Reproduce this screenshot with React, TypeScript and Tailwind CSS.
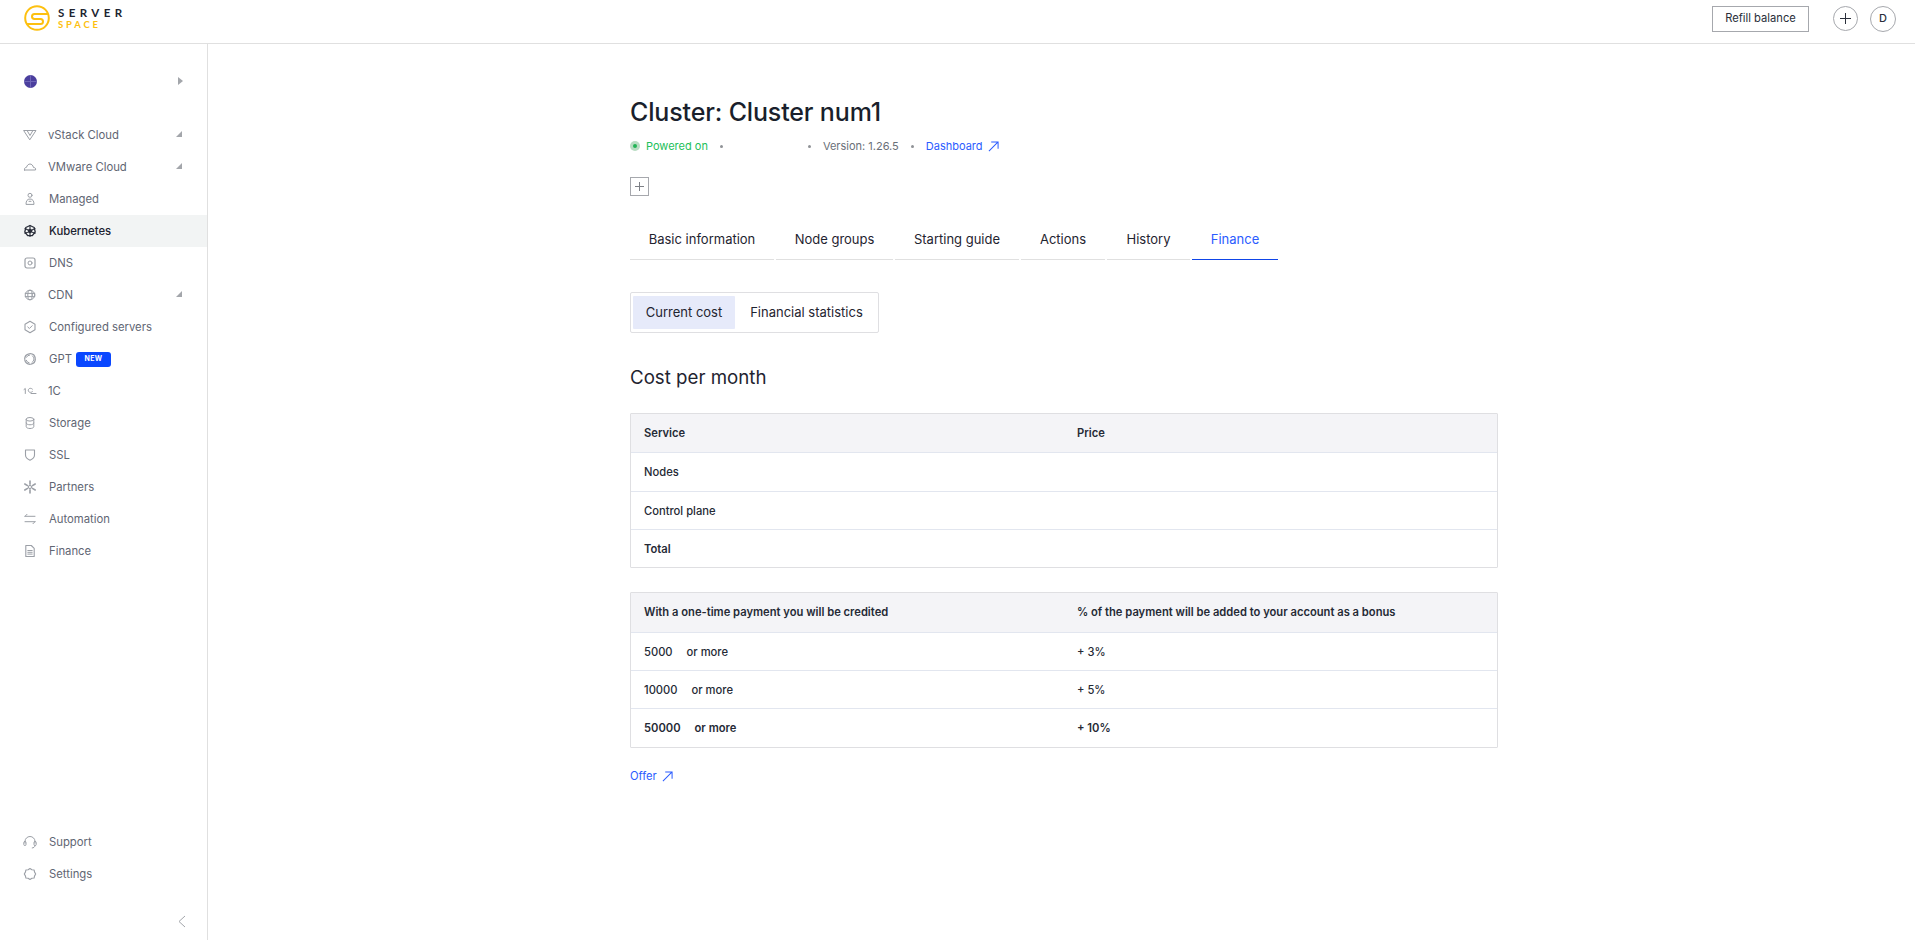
import React from "react";

const S = (p: { children: React.ReactNode; color?: string; w?: number }) => (
  <svg width={p.w ?? 16} height={p.w ?? 16} viewBox="0 0 16 16" fill="none" stroke={p.color ?? "#9b9fa6"} strokeWidth="1" strokeLinecap="round" strokeLinejoin="round">
    {p.children}
  </svg>
);

const icons: Record<string, React.ReactNode> = {
  vstack: <S><path d="M2 3.500h12L8 12.500z" /><path d="M5.200 3.700 8 8.500l2.800-4.800" /></S>,
  cloud: <S><path d="M2.500 11h11c.6-1.500-.6-2.700-2-2.500C11 6.300 9.500 5 8 5S5 6.300 4.500 8.300C3 8.300 2 9.700 2.500 11z" /></S>,
  managed: <S><circle cx="8" cy="4.300" r="2" /><path d="M4 13c0-3 1.200-5 4-5s4 2 4 5z" /><path d="M7 10.300h2" /></S>,
  k8s: <S color="#2a2e3a"><path d="M8 2.500l4.200 2 1 4.500-2.900 3.700H5.700L2.800 9l1-4.500z" strokeWidth="1.300" /><circle cx="8" cy="8" r="1.800" fill="#2a2e3a" /><path d="M8 2.500v11M3 5.500l10 5M13 5.500l-10 5" strokeWidth="1.100" /></S>,
  dns: <S><rect x="3" y="3" width="10" height="10" rx="2" strokeWidth="1.200" /><circle cx="8" cy="8" r="2" /></S>,
  cdn: <S><circle cx="8" cy="8" r="4.800" /><ellipse cx="8" cy="8" rx="2.200" ry="4.800" /><path d="M3.200 6.400h9.600M3.200 9.600h9.600" /></S>,
  conf: <S><path d="M8 2.300l5 2.900v5.600l-5 2.900-5-2.900V5.200z" strokeWidth="1.100" /><path d="M5.800 8l1.600 1.500 2.800-2.800" /></S>,
  gpt: <S><circle cx="8" cy="8" r="5.300" strokeDasharray="7 1.200" strokeWidth="1.300" /><circle cx="8" cy="8" r="4" strokeDasharray="4 3" /></S>,
  oneC: <S><path d="M2 6.500l1.300-1v5" /><path d="M10.500 6.200c-1.200-1.500-4-1.200-4.200 1s2.800 3 4.200 1.300" /><path d="M9 10.500h5" /></S>,
  storage: <S><ellipse cx="8" cy="4.300" rx="3.800" ry="1.800" /><path d="M4.200 4.300v7.400c0 1 1.700 1.800 3.800 1.800s3.800-.8 3.800-1.800V4.300" /><path d="M4.200 8c0 1 1.700 1.800 3.800 1.800s3.800-.8 3.800-1.800" /></S>,
  ssl: <S><path d="M3.500 3h9v5c0 2.500-2.100 4.200-4.500 5.300C5.600 12.200 3.500 10.500 3.500 8z" strokeWidth="1.100" /></S>,
  partners: <S><path d="M8 2v3.300M8 10.700V14M2.800 5l2.800 1.600M10.400 9.400 13.200 11M13.200 5l-2.800 1.600M5.600 9.400 2.800 11" strokeWidth="1.600" /><circle cx="8" cy="8" r="1.600" /></S>,
  auto: <S><path d="M3 5.300h10M3 5.300l2-2M13 10.700H3M13 10.700l-2 2" /></S>,
  finance: <S><path d="M3.800 2.500h5.500l2.900 2.900v8.100H3.800z" strokeWidth="1.100" /><path d="M5.800 7.500h4.400M5.800 9.300h4.400M5.800 11.100h4.400" /></S>,
  support: <S><path d="M3 9V7.500a5 5 0 0 1 10 0V9" /><rect x="1.800" y="7.500" width="2.200" height="4" rx="1" /><rect x="12" y="7.500" width="2.200" height="4" rx="1" /><path d="M13 11.500c0 1.500-1.500 2.500-3.500 2.500" strokeDasharray="1.500 1" /></S>,
  settings: <S><path d="M8 2.500l1.900 1.200 2.200.3.500 2.100L13.700 8l-1.100 1.900-.5 2.100-2.200.3L8 13.500l-1.900-1.200-2.200-.3-.5-2.100L2.300 8l1.100-1.900.5-2.100 2.200-.3z" strokeWidth="1.100" /></S>,
};

const Corner = () => (
  <svg width="6" height="6" viewBox="0 0 6 6"><path d="M6 0v6H0z" fill="#a3a6ab" /></svg>
);

const items: { k: string; label: string; corner?: boolean; active?: boolean; badge?: boolean; tight?: boolean }[] = [
  { k: "vstack", label: "vStack Cloud", corner: true, tight: true },
  { k: "cloud", label: "VMware Cloud", corner: true, tight: true },
  { k: "managed", label: "Managed" },
  { k: "k8s", label: "Kubernetes", active: true },
  { k: "dns", label: "DNS" },
  { k: "cdn", label: "CDN", corner: true, tight: true },
  { k: "conf", label: "Configured servers" },
  { k: "gpt", label: "GPT", badge: true },
  { k: "oneC", label: "1C", tight: true },
  { k: "storage", label: "Storage" },
  { k: "ssl", label: "SSL" },
  { k: "partners", label: "Partners" },
  { k: "auto", label: "Automation" },
  { k: "finance", label: "Finance" },
];

const NavRow = (p: { k: string; label: string; corner?: boolean; active?: boolean; badge?: boolean; tight?: boolean }) => (
  <div className={"h-8 flex items-center pl-[22px] pr-[25px] text-[11.3px] " + (p.active ? "bg-[#f2f4f4] text-[#1c2230] font-medium" : "text-[#5f6673]")}>
    <span className={"flex shrink-0 " + (p.tight ? "w-[26px]" : "w-[27px]")}>{icons[p.k]}</span>
    <span>{p.label}</span>
    {p.badge && (
      <span className="ml-[4px] w-[35px] h-[15px] rounded-[3px] bg-[#0a47ff] text-white text-[7px] font-bold flex items-center justify-center tracking-[0.3px]">NEW</span>
    )}
    {p.corner && <span className="ml-auto flex mb-[3px]"><Corner /></span>}
  </div>
);

const Arrow = () => (
  <svg width="11" height="11" viewBox="0 0 12 12" fill="none" stroke="#2b5cff" strokeWidth="1.100"><path d="M1 11 11 1M3.500 1H11v7.500" /></svg>
);

const Dot = () => <span className="w-[3px] h-[3px] rounded-full bg-[#8f9296] shrink-0" />;

const tabs = [
  { t: "Basic information", w: "w-[144px]" },
  { t: "Node groups", w: "w-[117px]" },
  { t: "Starting guide", w: "w-[124px]" },
  { t: "Actions", w: "w-[84px]" },
  { t: "History", w: "w-[83px]" },
  { t: "Finance", w: "w-[86px]", active: true },
];

const Row = (p: { a: React.ReactNode; b?: React.ReactNode; bold?: boolean; h?: string }) => (
  <div className={"flex items-center border-t border-[#e2e6ef] pt-px text-[11.2px] text-[#252a35] " + (p.h ?? "h-[38px]") + " " + (p.bold ? "font-semibold" : "font-medium")}>
    <div className="w-1/2 pl-[13px]">{p.a}</div>
    <div className="w-1/2 pl-[13px]">{p.b}</div>
  </div>
);

const Head = (p: { a: string; b: string; h: string }) => (
  <div className={"flex items-center bg-[#f4f4f7] text-[11.2px] font-semibold text-[#252a35] " + p.h}>
    <div className="w-1/2 pl-[13px]">{p.a}</div>
    <div className="w-1/2 pl-[13px]">{p.b}</div>
  </div>
);

export default function App() {
  return (
    <div className="h-[940px] w-full flex flex-col bg-white overflow-hidden font-['Inter',sans-serif]">
      <header className="h-[44px] shrink-0 border-b border-[#e0e0e0] flex items-center pl-6 pr-[19px]">
        <svg width="26" height="26" viewBox="0 0 26 26" fill="none" stroke="#fdc010" strokeWidth="2" className="mb-[7px]">
          <circle cx="13" cy="13" r="11.800" />
          <path d="M24 9H10.500a2.500 2.500 0 0 0 0 5h6a2.500 2.500 0 0 1 0 5H3" />
        </svg>
        <div className="ml-2 mb-[7px] flex flex-col font-['Lato',sans-serif] font-bold leading-none">
          <span className="text-[11.5px] tracking-[4.400px] text-[#20242f] h-[13px]">SERVER</span>
          <span className="text-[9.5px] tracking-[2.800px] text-[#fdc010]">SPACE</span>
        </div>
        <button className="ml-auto w-[97px] h-[26px] border border-[#a6a8ad] text-[11.200px] text-[#2a2f3a] flex items-center justify-center mb-[6px]">Refill balance</button>
        <span className="ml-[24px] w-[25px] h-[25px] rounded-full border border-[#a6a8ad] flex items-center justify-center mb-[6px]">
          <svg width="11" height="11" viewBox="0 0 11 11" stroke="#2a2f3a" strokeWidth="1"><path d="M5.500 0v11M0 5.500h11" /></svg>
        </span>
        <span className="ml-[12px] w-[26px] h-[26px] rounded-full border border-[#a6a8ad] flex items-center justify-center text-[11px] font-medium text-[#2a2f3a] mb-[6px]">D</span>
      </header>
      <div className="flex flex-1 min-h-0">
        <aside className="w-[208px] shrink-0 border-r border-[#e0e0e0] flex flex-col">
          <div className="h-[75px] flex items-center pl-6 pr-6 pb-px">
            <span className="w-[13px] h-[13px] rounded-full bg-[#4b3f9e] relative overflow-hidden">
              <span className="absolute left-[6px] top-0 w-px h-full bg-[#6f66b8]" />
              <span className="absolute top-[6px] left-0 h-px w-full bg-[#6f66b8]" />
            </span>
            <svg className="ml-auto" width="5" height="8" viewBox="0 0 5 8"><path d="M0 0l5 4-5 4z" fill="#a3a6ab" /></svg>
          </div>
          <nav>
            {items.map((i) => <NavRow key={i.label} {...i} />)}
          </nav>
          <div className="mt-auto">
            <NavRow k="support" label="Support" />
            <NavRow k="settings" label="Settings" />
            <div className="h-[50px] flex items-end justify-end pr-[21px] pb-[12px]">
              <svg width="8" height="13" viewBox="0 0 8 13" fill="none" stroke="#a3a6ab" strokeWidth="1"><path d="M7 1 1 6.500 7 12" /></svg>
            </div>
          </div>
        </aside>
        <main className="flex-1 pl-[422px] pt-[51px]">
          <div className="w-[868px]">
            <h1 className="text-[25px] leading-[34px] font-medium text-[#1a1f2c] tracking-[-0.15px]">Cluster: Cluster num1</h1>
            <div className="mt-[9px] h-4 flex items-center text-[11px] text-[#6a6f78]">
              <span className="w-[10px] h-[10px] rounded-full bg-[#b8dcc2] flex items-center justify-center"><span className="w-1 h-1 rounded-full bg-[#22b455]" /></span>
              <span className="ml-[6px] text-[#22c05a]">Powered on</span>
              <span className="ml-[12px] flex"><Dot /></span>
              <span className="ml-[85px] flex"><Dot /></span>
              <span className="ml-[12px]">Version: 1.26.5</span>
              <span className="ml-[12px] flex"><Dot /></span>
              <span className="ml-[12px] text-[#2b5cff]">Dashboard</span>
              <span className="ml-[5px] flex"><Arrow /></span>
            </div>
            <button className="mt-[23px] w-[19px] h-[19px] border border-[#a6a8ad] flex items-center justify-center">
              <svg width="9" height="9" viewBox="0 0 9 9" stroke="#7d8086" strokeWidth="1"><path d="M4.500 0v9M0 4.500h9" /></svg>
            </button>
            <div className="mt-[24px] flex gap-[2px] h-[40px]">
              {tabs.map((t) => (
                <div key={t.t} className={"flex items-center justify-center border-b pt-px text-[13px] " + t.w + " " + (t.active ? "border-[#0f45e8] text-[#2b5cff]" : "border-[#e0e0e0] text-[#1f2430]")}>{t.t}</div>
              ))}
            </div>
            <div className="mt-[32px] w-[249px] h-[41px] border border-[#dfdfe2] rounded-[2px] flex items-center pl-[2px] text-[13px] text-[#1f2430]">
              <span className="w-[102px] h-[33px] pt-px bg-[#e6eafa] rounded-[1px] flex items-center justify-center">Current cost</span>
              <span className="w-[143px] pt-px flex items-center justify-center">Financial statistics</span>
            </div>
            <h2 className="mt-[31px] text-[18.7px] leading-7 text-[#1f2430]">Cost per month</h2>
            <div className="mt-[21px] border border-[#dfdfe2] rounded-[1px]">
              <Head a="Service" b="Price" h="h-[38px]" />
              <Row a="Nodes" h="h-[39px]" />
              <Row a="Control plane" />
              <Row a="Total" bold />
            </div>
            <div className="mt-[24px] border border-[#dfdfe2] rounded-[1px]">
              <Head a="With a one-time payment you will be credited" b="% of the payment will be added to your account as a bonus" h="h-[39px]" />
              <Row a={<><span>5000</span><span className="ml-[14px]">or more</span></>} b="+ 3%" />
              <Row a={<><span>10000</span><span className="ml-[14px]">or more</span></>} b="+ 5%" />
              <Row a={<><span>50000</span><span className="ml-[14px]">or more</span></>} b="+ 10%" bold h="h-[39px]" />
            </div>
            <div className="mt-[20px] flex items-center text-[11.2px] text-[#2b5cff]">
              <span>Offer</span>
              <span className="ml-[5px] flex"><Arrow /></span>
            </div>
          </div>
        </main>
      </div>
    </div>
  );
}
